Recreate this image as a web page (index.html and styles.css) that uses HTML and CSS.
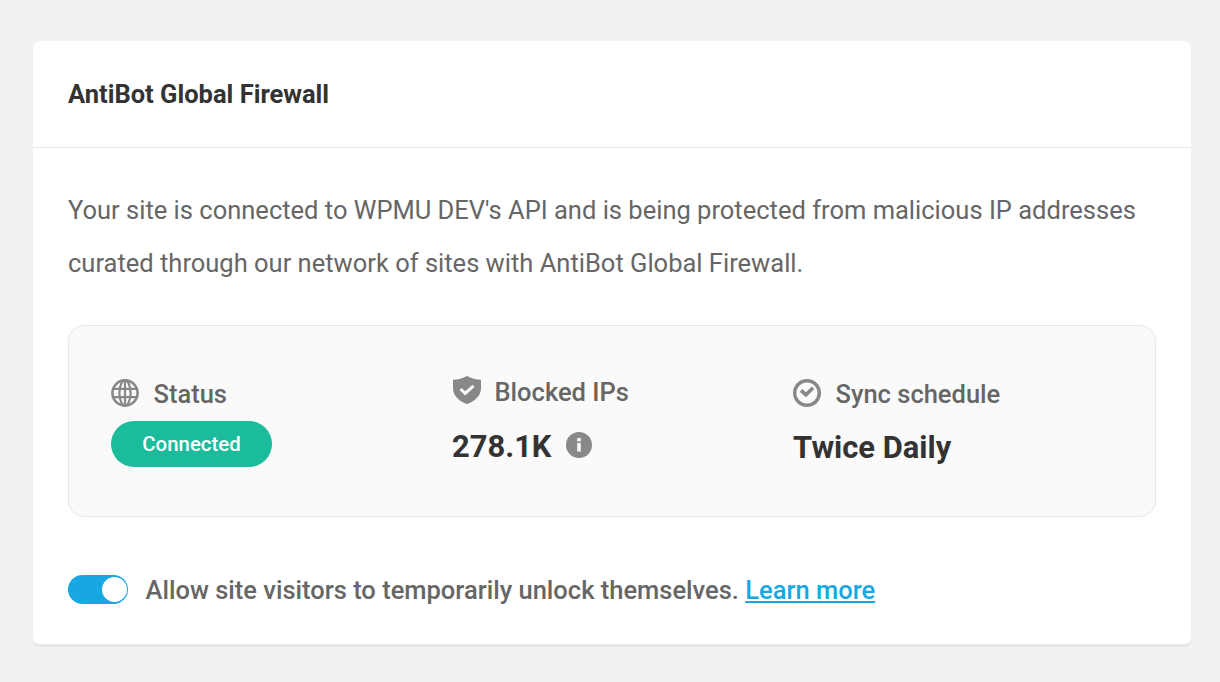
FILE: index.html
```html
<!DOCTYPE html>
<html lang="en">
<head>
<meta charset="utf-8">
<title>AntiBot Global Firewall</title>
<link rel="stylesheet" href="styles.css">
</head>
<body>
<main class="card">
  <header class="card-head"><h2 class="card-title">AntiBot Global Firewall</h2></header>
  <div class="card-body">
    <p class="intro">Your site is connected to WPMU DEV's API and is being protected from malicious IP addresses curated through our network of sites with AntiBot Global Firewall.</p>
    <section class="stats">
      <div class="stat">
        <div class="stat-label">
          <svg class="icon" viewBox="0 0 28 28" fill="none" stroke="#888" stroke-width="2.6"><circle cx="14" cy="14" r="12.6"/><ellipse cx="14" cy="14" rx="5.6" ry="12.6" stroke-width="2.2"/><path d="M14 1.4v25.2M2 9.8h24M2 18.2h24" stroke-width="2.2"/></svg>
          <span class="label-text">Status</span>
        </div>
        <span class="pill">Connected</span>
      </div>
      <div class="stat stat-shift">
        <div class="stat-label">
          <svg class="icon icon-shield" viewBox="0 0 28 28"><path fill="#888" d="M14 0 C18 2.4 23 3.8 28 3.8 V12 C28 20 21.5 25.5 14 28 C6.5 25.5 0 20 0 12 V3.8 C5 3.8 10 2.4 14 0Z"/><path d="M7.5 13l4.7 4.4 8.3-7.6" fill="none" stroke="#fafafa" stroke-width="3"/></svg>
          <span class="label-text">Blocked IPs</span>
        </div>
        <div class="stat-value">278.1K
          <svg class="info" viewBox="0 0 26 26"><circle cx="13" cy="13" r="13" fill="#888"/><rect x="11.2" y="11" width="3.6" height="8.5" fill="#fafafa"/><rect x="11.2" y="6" width="3.6" height="3.4" fill="#fafafa"/></svg>
        </div>
      </div>
      <div class="stat">
        <div class="stat-label">
          <svg class="icon" viewBox="0 0 28 28" fill="none" stroke="#888"><circle cx="14" cy="14" r="12.3" stroke-width="3.4"/><path d="M8 11.5l5 4.2 7-7" stroke-width="3.6"/></svg>
          <span class="label-text">Sync schedule</span>
        </div>
        <div class="stat-value stat-value-text">Twice Daily</div>
      </div>
    </section>
    <div class="toggle-row">
      <span class="toggle"><span class="knob"></span></span>
      <span class="toggle-text">Allow site visitors to temporarily unlock themselves. <a href="#" class="link">Learn more</a></span>
    </div>
  </div>
</main>
</body>
</html>
```
FILE: styles.css
```css
* { box-sizing: border-box; }
html, body { margin: 0; height: 100%; }
body {
  background: #f1f1f1;
  padding: 41px 29px 0 33px;
  font-family: Roboto, "Liberation Sans", sans-serif;
  overflow: hidden;
}
.card {
  background: #fff;
  border-radius: 6px;
  box-shadow: 0 3px 0 #e6e6e6;
  height: 603px;
}
.card-head {
  height: 107px;
  padding: 0 35px;
  display: flex;
  align-items: center;
  border-bottom: 1px solid #e6e6e6;
}
.card-title {
  margin: 0;
  font-size: 25.5px;
  font-weight: 700;
  color: #333;
}
.card-body { padding: 36px 35px 0; }
.intro {
  margin: 0;
  font-size: 25.5px;
  line-height: 53px;
  color: #666;
}
.stats {
  margin-top: 35px;
  height: 192px;
  background: #fafafa;
  border: 1px solid #e6e6e6;
  border-radius: 16px;
  padding: 50px 0 0 42px;
  display: grid;
  grid-template-columns: repeat(3, 341px);
  align-content: start;
}
.stat-label {
  display: flex;
  align-items: center;
  gap: 14.5px;
  height: 34px;
}
.stat-shift .stat-label { margin-top: -2px; margin-bottom: 2px; }
.icon { width: 28px; height: 28px; flex: none; }
.icon-shield { margin-left: 1px; margin-right: -1px; margin-bottom: 2px; }
.label-text {
  font-size: 25.5px;
  font-weight: 500;
  color: #666;
  position: relative;
  top: 1px;
}
.pill {
  display: inline-block;
  margin-top: 11px;
  width: 161px;
  height: 46px;
  line-height: 46px;
  border-radius: 23px;
  background: #1abc9c;
  color: #fff;
  font-size: 20.4px;
  font-weight: 500;
  text-align: center;
}
.stat-value {
  margin-top: 17px;
  display: flex;
  align-items: center;
  gap: 14px;
  font-size: 30.9px;
  font-weight: 700;
  line-height: 44px;
  color: #333;
}
.stat-value-text { margin-top: 16px; }
.info { width: 26px; height: 26px; margin-bottom: 4px; }
.toggle-row {
  margin-top: 57px;
  display: flex;
  align-items: center;
  gap: 17.5px;
}
.toggle {
  width: 60px;
  height: 29px;
  border-radius: 15px;
  background: #17a8e3;
  display: flex;
  justify-content: flex-end;
  align-items: center;
  padding-right: 1.5px;
}
.knob {
  width: 25px;
  height: 25px;
  border-radius: 50%;
  background: #fff;
}
.toggle-text {
  font-size: 25.5px;
  font-weight: 500;
  color: #666;
  position: relative;
  top: 1px;
}
.link { color: #17a8e3; text-decoration: underline; }
```
